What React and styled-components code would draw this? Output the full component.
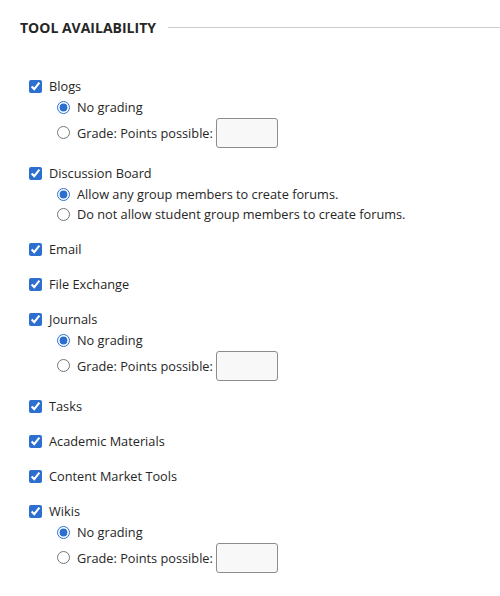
import React from 'react';
import styled, { createGlobalStyle } from 'styled-components';

const GlobalStyle = createGlobalStyle`
  body {
    margin: 0;
    background: #fff;
    font-family: "Open Sans", "Liberation Sans", sans-serif;
    font-size: 12.75px;
    color: #262626;
  }
`;

const Section = styled.section`
  padding: 18px 0 0 20px;
`;

const Header = styled.div`
  display: flex;
  align-items: center;
  gap: 12px;
  height: 20px;
`;

const Title = styled.h2`
  margin: 0;
  font-size: 14px;
  font-weight: 700;
  line-height: 20px;
  text-transform: uppercase;
  color: #262626;
  white-space: nowrap;
`;

const Rule = styled.div`
  flex: 1;
  height: 1px;
  margin-top: -1px;
  background: #cdcdcd;
`;

const ToolList = styled.ul`
  list-style: none;
  margin: 38px 0 0;
  padding: 0 0 0 9px;
  display: flex;
  flex-direction: column;
  gap: 15px;
`;

const Tool = styled.li`
  display: flex;
  flex-direction: column;
`;

const Row = styled.label`
  display: flex;
  align-items: center;
  gap: 7px;
  min-height: 20px;
  line-height: 20px;
`;

const Options = styled.div`
  display: flex;
  flex-direction: column;
  padding-left: 28px;
  margin-top: 1px;
`;

const OptionRow = styled(Row)`
  gap: 7px;
  min-height: ${p => (p.$tall ? '31px' : '20px')};
`;

const Check = styled.input.attrs({ type: 'checkbox' })`
  margin: 0;
  width: 13px;
  height: 13px;
  accent-color: #2d6fcf;
`;

const Radio = styled.input.attrs({ type: 'radio' })`
  margin: 0;
  width: 13px;
  height: 13px;
  accent-color: #2d6fcf;
`;

const Points = styled.input.attrs({ type: 'text' })`
  box-sizing: border-box;
  width: 62px;
  height: 30px;
  margin-left: -4px;
  border: 1px solid #8c8c8c;
  border-radius: 3px;
  background: #f8f8f8;
  font: inherit;
`;

const GradingOptions = ({ name }) => (
  <Options>
    <OptionRow>
      <Radio name={name} defaultChecked />
      No grading
    </OptionRow>
    <OptionRow $tall>
      <Radio name={name} />
      Grade: Points possible:
      <Points />
    </OptionRow>
  </Options>
);

const tools = [
  { label: 'Blogs', grading: true },
  {
    label: 'Discussion Board',
    options: [
      'Allow any group members to create forums.',
      'Do not allow student group members to create forums.',
    ],
  },
  { label: 'Email' },
  { label: 'File Exchange' },
  { label: 'Journals', grading: true },
  { label: 'Tasks' },
  { label: 'Academic Materials' },
  { label: 'Content Market Tools' },
  { label: 'Wikis', grading: true },
];

const App = () => {
  return (
    <>
      <GlobalStyle />
      <Section>
        <Header>
          <Title>Tool Availability</Title>
          <Rule />
        </Header>
        <ToolList>
          {tools.map((t, i) => (
            <Tool key={t.label}>
              <Row>
                <Check defaultChecked />
                {t.label}
              </Row>
              {t.grading && <GradingOptions name={'grade' + i} />}
              {t.options && (
                <Options>
                  {t.options.map((o, j) => (
                    <OptionRow key={o}>
                      <Radio name={'opt' + i} defaultChecked={j === 0} />
                      {o}
                    </OptionRow>
                  ))}
                </Options>
              )}
            </Tool>
          ))}
        </ToolList>
      </Section>
    </>
  );
};

export default App;
